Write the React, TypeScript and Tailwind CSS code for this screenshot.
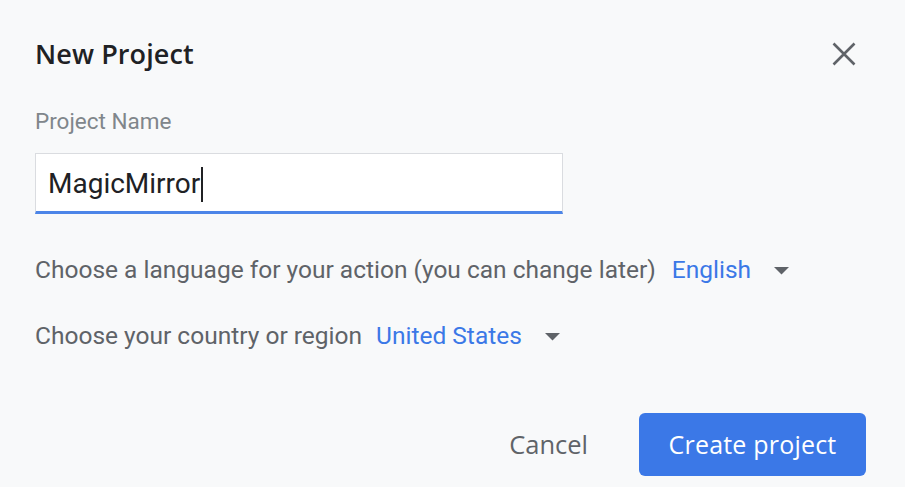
import React from 'react';

const Caret: React.FC = () => (
  <svg width="15" height="8" viewBox="0 0 15 8" className="ml-[23px] mt-[1px]">
    <path d="M0 0 L15 0 L7.5 7.5 Z" fill="#5f6368" />
  </svg>
);

const App: React.FC = () => {
  return (
    <div className="w-[905px] h-[487px] bg-[#f8f9fa] flex flex-col pl-[35px] pr-[39px] font-['Roboto',sans-serif] overflow-hidden">
      {/* header */}
      <div className="flex items-center justify-between h-[54px] mt-[27px]">
        <h1 className="text-[27px] text-[#202124] font-['Open_Sans',sans-serif] font-semibold tracking-[0.1px]">New Project</h1>
        <svg width="24" height="24" viewBox="0 0 24 24" className="mr-[10px]">
          <path d="M1.5 1.5 L22.5 22.5 M22.5 1.5 L1.5 22.5" stroke="#5f6368" strokeWidth="2.6" />
        </svg>
      </div>

      {/* project name */}
      <label className="text-[22.5px] text-[#80868b] mt-[27px] leading-[26px]">Project Name</label>
      <div className="mt-[19px] w-[528px] h-[61px] bg-white border border-[#dadce0] border-b-[3px] border-b-[#4c85e8] flex items-center pl-[12px] pt-[3px]">
        <span className="text-[28px] text-[#202124] leading-[34px]">MagicMirror</span>
        <span className="w-[2px] h-[35px] bg-[#202124] ml-[1px]" />
      </div>

      {/* language */}
      <div className="flex items-center mt-[42px] h-[28px] text-[24.5px]">
        <span className="text-[#5f6368]">Choose a language for your action (you can change later)</span>
        <span className="text-[#3b78e7] ml-[16px]">English</span>
        <Caret />
      </div>

      {/* country */}
      <div className="flex items-center mt-[38px] h-[28px] text-[24.5px]">
        <span className="text-[#5f6368]">Choose your country or region</span>
        <span className="text-[#3b78e7] ml-[14px]">United States</span>
        <Caret />
      </div>

      {/* actions */}
      <div className="flex items-center justify-end mt-[63px]">
        <button className="text-[25.5px] text-[#5f6368] font-['Open_Sans',sans-serif] font-medium mr-[51px]">Cancel</button>
        <button className="w-[227px] h-[63px] rounded-[6px] bg-[#3b78e7] text-white text-[25px] font-['Open_Sans',sans-serif] font-medium tracking-[0.2px]">
          Create project
        </button>
      </div>
    </div>
  );
};

export default App;
